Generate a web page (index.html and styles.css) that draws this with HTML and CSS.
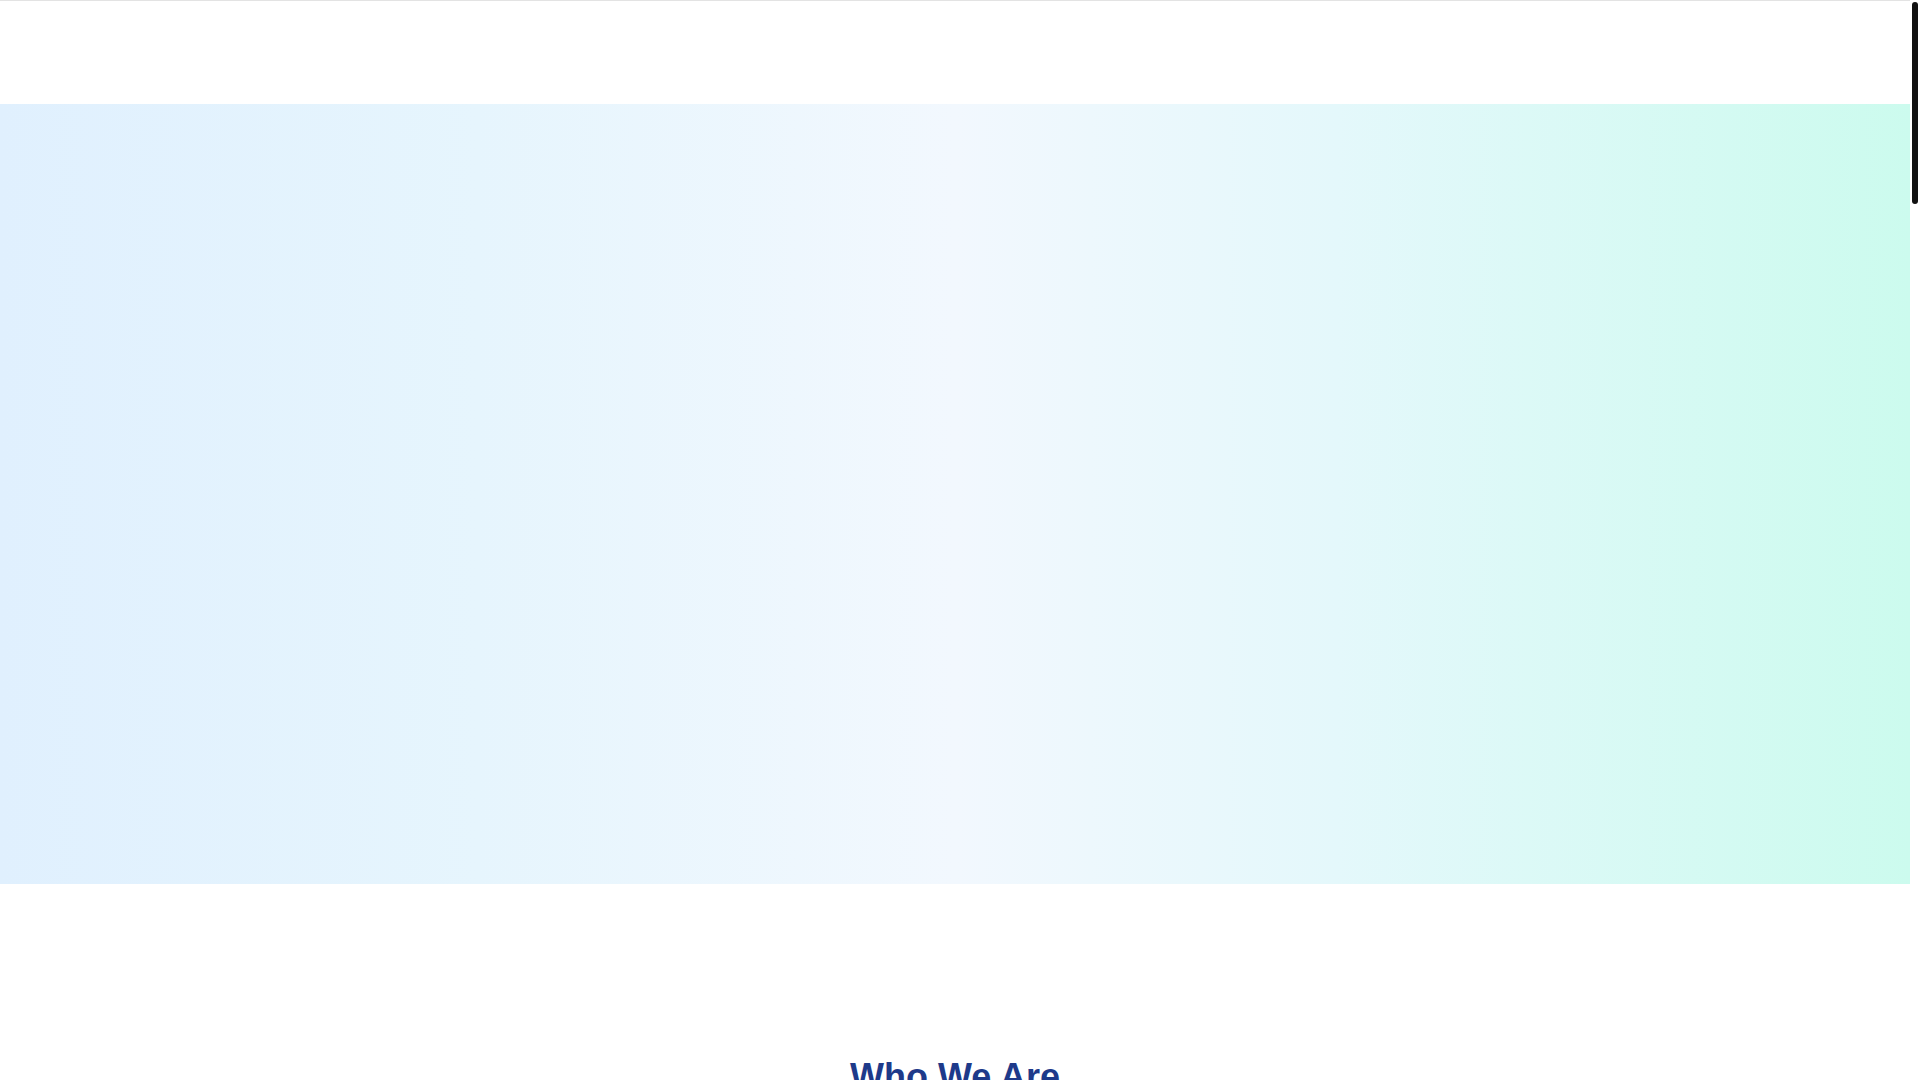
FILE: index.html
```html
<!DOCTYPE html>
<html lang="en">
<head>
<meta charset="utf-8">
<title>Who We Are</title>
<link rel="stylesheet" href="styles.css">
</head>
<body>
<div class="page">
  <header class="site-header"></header>
  <section class="hero"></section>
  <main class="about">
    <h2 class="about-title">Who We Are</h2>
    <div class="about-body"></div>
  </main>
</div>
<div class="scroll-rail"><div class="scroll-thumb"></div></div>
</body>
</html>
```

FILE: styles.css
```css
* {
  box-sizing: border-box;
}
html, body {
  height: 100%;
  overflow: hidden;
}
body {
  margin: 0;
  display: flex;
  font-family: "Liberation Sans", Arial, sans-serif;
  background: #ffffff;
}
.page {
  flex: 1;
  min-width: 0;
  height: 100%;
  overflow: hidden;
}
.scroll-rail {
  width: 10px;
  flex: none;
  background: #ffffff;
  padding: 2px 2px 0 2px;
}
.scroll-thumb {
  width: 6px;
  height: 202px;
  background: #111111;
  border-radius: 3px;
}
.site-header {
  height: 104px;
  border-top: 1px solid #e3e3e3;
  background: #ffffff;
}
.hero {
  height: 780px;
  background: linear-gradient(to right, #e0f0fe 0%, #e6f5fd 25%, #f2f8fe 50%, #e4f8fb 70%, #ccfbee 100%);
}
.about {
  padding-top: 173px;
}
.about-title {
  margin: 0;
  text-align: center;
  font-size: 36px;
  line-height: 40px;
  font-weight: 700;
  color: #1e3a8a;
}
.about-body {
  min-height: 4700px;
}
```
